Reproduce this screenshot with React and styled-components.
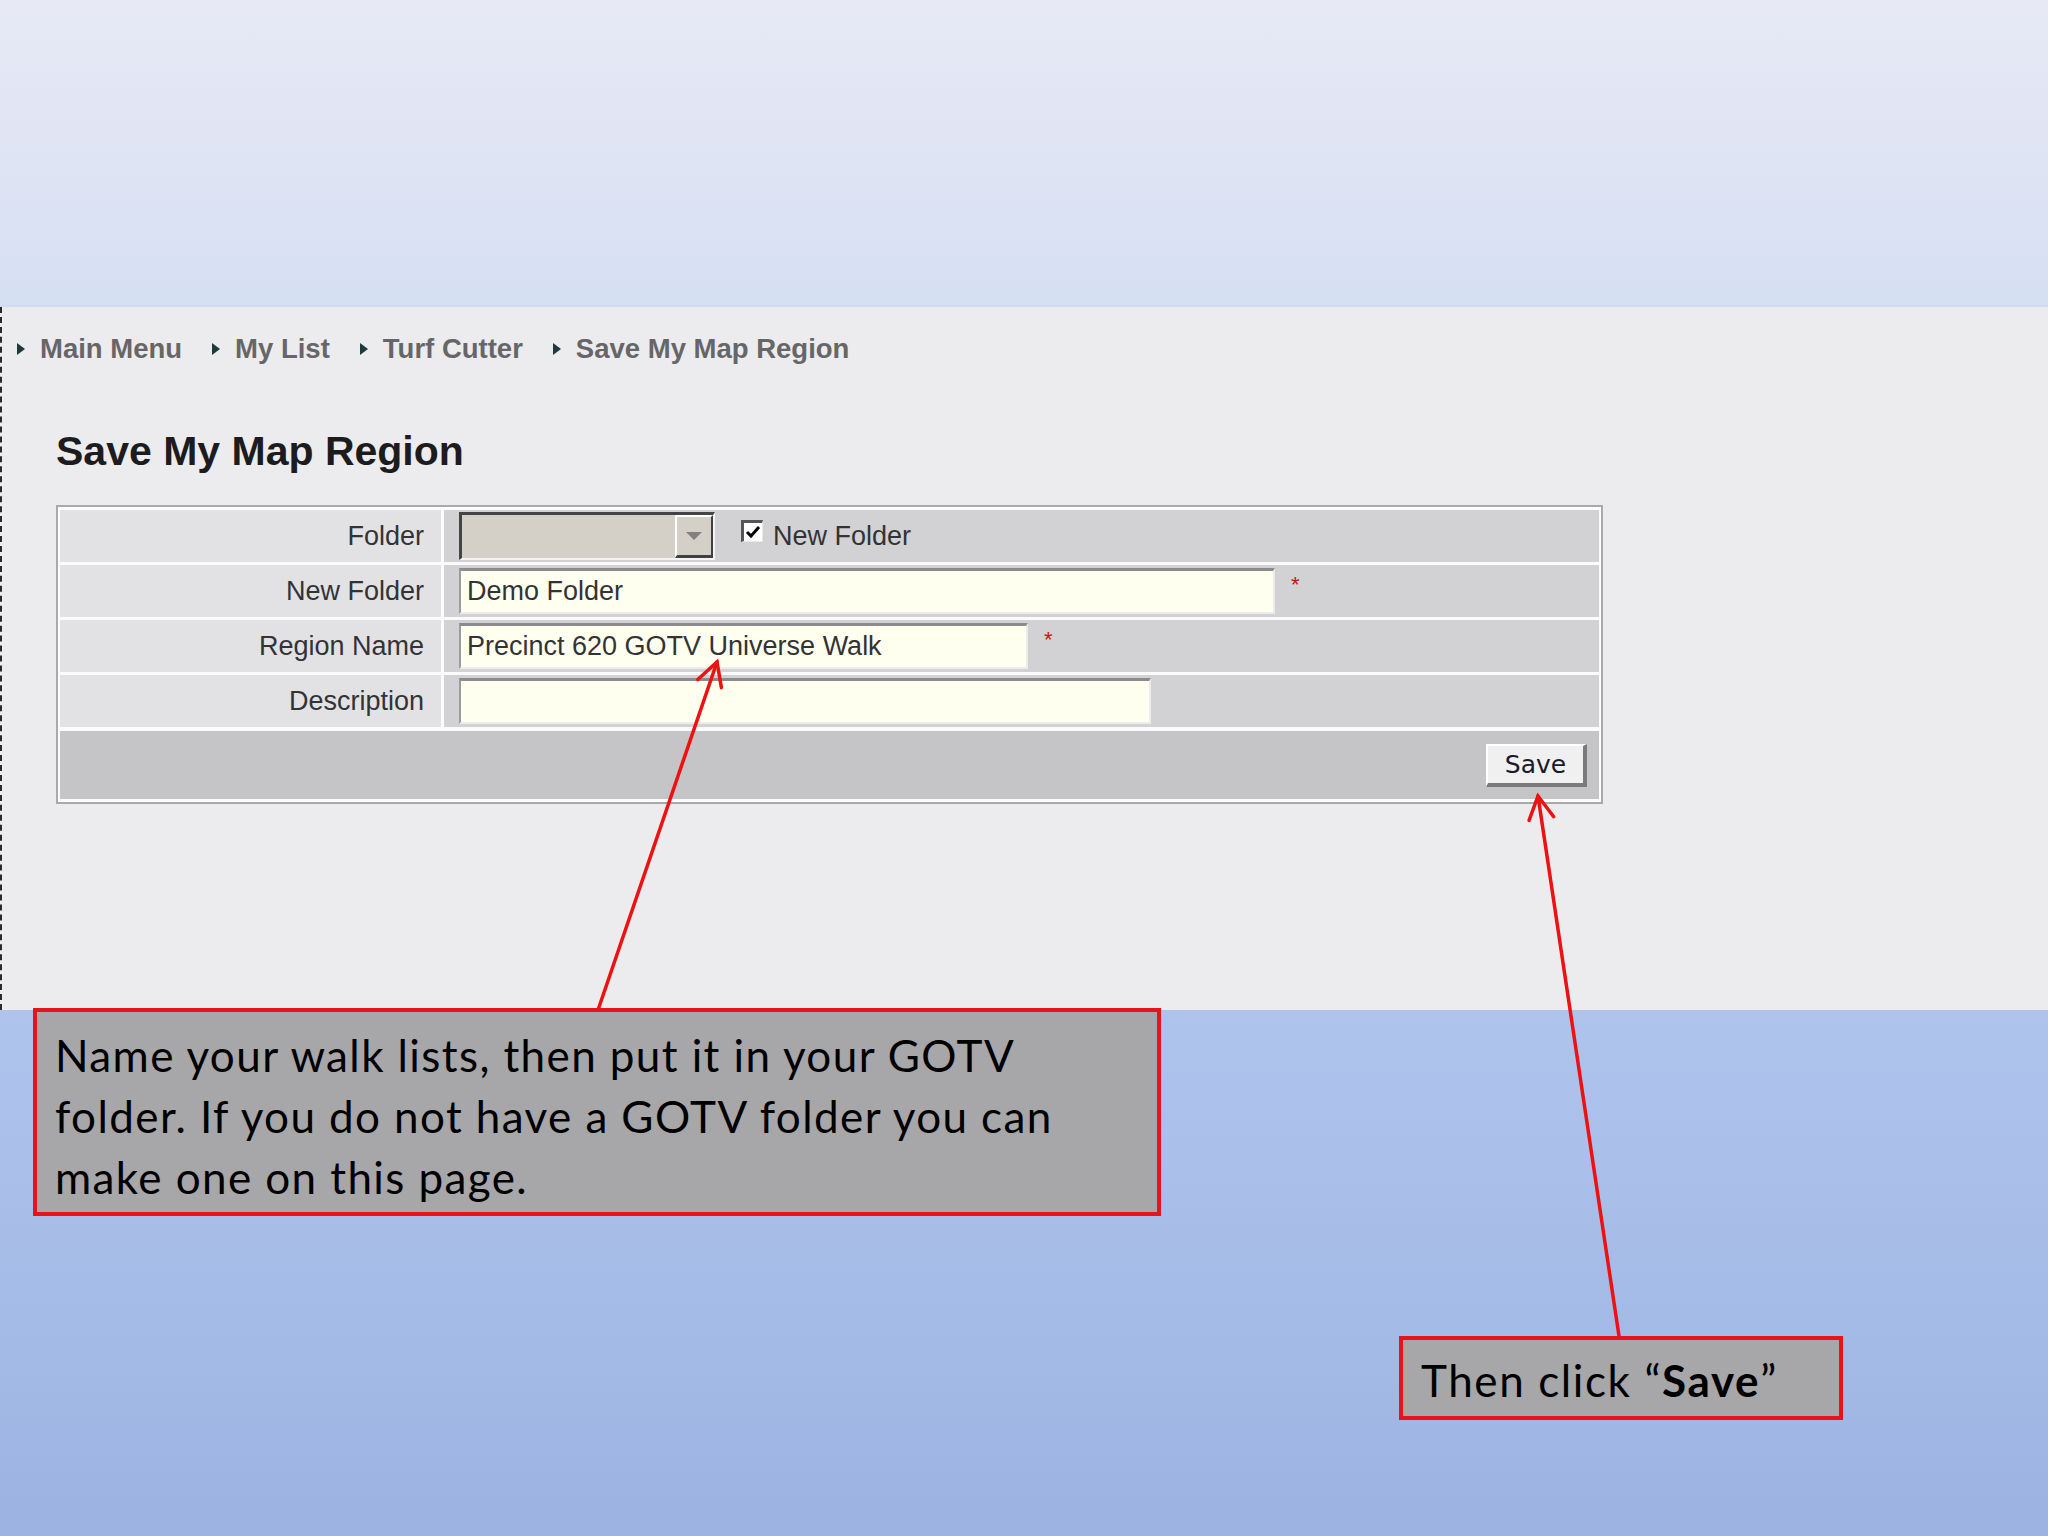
import React from 'react';
import styled, { createGlobalStyle } from 'styled-components';

const GlobalStyle = createGlobalStyle`
  html, body {
    margin: 0;
    padding: 0;
    background: #ecebed;
  }
  body {
    font-family: "Liberation Sans", Arial, sans-serif;
  }
`;

const Slide = styled.div`
  position: relative;
  width: 2048px;
  height: 1536px;
  display: flex;
  flex-direction: column;
  overflow: hidden;
`;

const TopBand = styled.div`
  height: 305px;
  flex: none;
  background: linear-gradient(180deg, #e7e9f5 0%, #dde3f3 60%, #d5e0f3 100%);
  border-bottom: 2px solid #cfdbf1;
`;

const Screen = styled.div`
  height: 703px;
  flex: none;
  box-sizing: border-box;
  background: #ecebed;
  border-left: 2px dashed #2a2a2a;
  padding: 22px 0 0 15px;
  display: flex;
  flex-direction: column;
`;

const BottomBand = styled.div`
  flex: 1;
  background: linear-gradient(180deg, #afc4ec 0%, #a6bce8 50%, #9cb3e2 100%);
`;

const Breadcrumbs = styled.nav`
  display: flex;
  align-items: center;
  gap: 30px;
  height: 40px;
`;

const Crumb = styled.span`
  display: flex;
  align-items: center;
  gap: 15px;
  font-size: 27.5px;
  font-weight: bold;
  color: #666668;
`;

const Arrowhead = styled.span`
  width: 0;
  height: 0;
  border-top: 6px solid transparent;
  border-bottom: 6px solid transparent;
  border-left: 8px solid #1d3b3a;
`;

const Title = styled.h1`
  margin: 58px 0 0 39px;
  font-size: 41px;
  font-weight: bold;
  color: #1c1c1e;
  line-height: 48px;
`;

const FormTable = styled.table`
  margin: 30px 0 0 39px;
  width: 1547px;
  border-collapse: separate;
  border-spacing: 0 3px;
  border: 2px solid #a9a9ab;
  box-shadow: inset 0 0 0 1px #ffffff;
  background: #fbfbfb;
  padding: 0 2px;
  font-size: 27px;
  color: #333336;
`;

const LabelCell = styled.td`
  width: 364px;
  height: 52px;
  padding: 0 17px 0 0;
  text-align: right;
  background: #e2e2e4;
  border-right: 3px solid #fbfbfb;
  white-space: nowrap;
`;

const ValueCell = styled.td`
  height: 52px;
  padding: 0 0 0 15px;
  background: #d2d2d4;
`;

const FooterCell = styled.td`
  height: 68px;
  padding: 0 12px 0 0;
  background: #c5c5c7;
  text-align: right;
  border-top: 1px solid #fbfbfb;
`;

const FieldLine = styled.div`
  display: flex;
  align-items: center;
`;

const TextBox = styled.div`
  box-sizing: border-box;
  width: ${(p) => p.$width}px;
  height: 46px;
  padding: 0 0 0 6px;
  display: flex;
  align-items: center;
  background: #fffff0;
  border-top: 3px solid #8c8c8e;
  border-left: 2px solid #9c9c9e;
  border-bottom: 2px solid #ececea;
  border-right: 2px solid #ececea;
  color: #333336;
  font-size: 27px;
`;

const Required = styled.span`
  margin: -12px 0 0 16px;
  color: #cc1111;
  font-size: 22px;
  align-self: center;
`;

const SelectBox = styled.div`
  box-sizing: border-box;
  width: 256px;
  height: 48px;
  display: flex;
  justify-content: flex-end;
  background: #d4d0c8;
  border-top: 3px solid #444446;
  border-left: 3px solid #444446;
  border-bottom: 2px solid #f4f4f4;
  border-right: 2px solid #f4f4f4;
`;

const DropButton = styled.div`
  box-sizing: border-box;
  width: 38px;
  display: flex;
  align-items: center;
  justify-content: center;
  background: #d4d0c8;
  border-top: 2px solid #ffffff;
  border-left: 2px solid #ffffff;
  border-bottom: 3px solid #404040;
  border-right: 2px solid #404040;
`;

const DropArrow = styled.span`
  width: 0;
  height: 0;
  border-left: 8px solid transparent;
  border-right: 8px solid transparent;
  border-top: 8px solid #808080;
`;

const CheckLabel = styled.label`
  display: flex;
  align-items: center;
  gap: 10px;
  margin-left: 26px;
  color: #333336;
`;

const CheckBox = styled.span`
  box-sizing: border-box;
  width: 22px;
  height: 22px;
  margin-top: -10px;
  display: flex;
  align-items: center;
  justify-content: center;
  background: #ffffff;
  border-top: 3px solid #555;
  border-left: 3px solid #555;
  border-bottom: 1px solid #e8e8e8;
  border-right: 1px solid #e8e8e8;
`;

const SaveButton = styled.button`
  box-sizing: border-box;
  width: 101px;
  height: 43px;
  padding: 0;
  font-family: "DejaVu Sans", Tahoma, sans-serif;
  font-size: 25px;
  font-weight: 500;
  color: #1a1a2a;
  background: #f0f0f0;
  border-top: 2px solid #ffffff;
  border-left: 2px solid #ffffff;
  border-bottom: 4px solid #7a7a7a;
  border-right: 4px solid #7a7a7a;
  vertical-align: middle;
`;

const Callout = styled.div`
  position: absolute;
  left: ${(p) => p.$left}px;
  top: ${(p) => p.$top}px;
  width: ${(p) => p.$width}px;
  height: ${(p) => p.$height}px;
  box-sizing: border-box;
  padding: ${(p) => p.$pad};
  background: #a7a6a9;
  border: 4px solid #e8121c;
  font-family: Lato, "Open Sans", sans-serif;
  font-size: 44px;
  line-height: 61px;
  color: #000000;
  letter-spacing: ${(p) => p.$spacing}px;
  white-space: nowrap;
`;

const Overlay = styled.svg`
  position: absolute;
  left: 0;
  top: 0;
  pointer-events: none;
`;

function Pointer({ x1, y1, x2, y2 }) {
  const angle = Math.atan2(y1 - y2, x1 - x2);
  const len = 26;
  const spread = 0.5;
  const a = [x2 + len * Math.cos(angle - spread), y2 + len * Math.sin(angle - spread)];
  const b = [x2 + len * Math.cos(angle + spread), y2 + len * Math.sin(angle + spread)];
  return (
    <g stroke="#ee1111" strokeWidth="3.5" fill="none" strokeLinecap="round">
      <line x1={x1} y1={y1} x2={x2} y2={y2} />
      <polyline points={`${a[0]},${a[1]} ${x2},${y2} ${b[0]},${b[1]}`} />
    </g>
  );
}

const crumbs = ['Main Menu', 'My List', 'Turf Cutter', 'Save My Map Region'];

export default function App() {
  return (
    <>
      <GlobalStyle />
      <Slide>
        <TopBand />
        <Screen>
          <Breadcrumbs>
            {crumbs.map((c) => (
              <Crumb key={c}>
                <Arrowhead />
                {c}
              </Crumb>
            ))}
          </Breadcrumbs>
          <Title>Save My Map Region</Title>
          <FormTable>
            <tbody>
              <tr>
                <LabelCell>Folder</LabelCell>
                <ValueCell>
                  <FieldLine>
                    <SelectBox>
                      <DropButton>
                        <DropArrow />
                      </DropButton>
                    </SelectBox>
                    <CheckLabel>
                      <CheckBox>
                        <svg width="16" height="16" viewBox="0 0 16 16">
                          <path d="M2 8 L6 12 L14 3" stroke="#000" strokeWidth="3" fill="none" />
                        </svg>
                      </CheckBox>
                      New Folder
                    </CheckLabel>
                  </FieldLine>
                </ValueCell>
              </tr>
              <tr>
                <LabelCell>New Folder</LabelCell>
                <ValueCell>
                  <FieldLine>
                    <TextBox $width={816}>Demo Folder</TextBox>
                    <Required>*</Required>
                  </FieldLine>
                </ValueCell>
              </tr>
              <tr>
                <LabelCell>Region Name</LabelCell>
                <ValueCell>
                  <FieldLine>
                    <TextBox $width={569}>Precinct 620 GOTV Universe Walk</TextBox>
                    <Required>*</Required>
                  </FieldLine>
                </ValueCell>
              </tr>
              <tr>
                <LabelCell>Description</LabelCell>
                <ValueCell>
                  <FieldLine>
                    <TextBox $width={692} />
                  </FieldLine>
                </ValueCell>
              </tr>
              <tr>
                <FooterCell colSpan={2}>
                  <SaveButton>Save</SaveButton>
                </FooterCell>
              </tr>
            </tbody>
          </FormTable>
        </Screen>
        <BottomBand />

        <Overlay width="2048" height="1536" viewBox="0 0 2048 1536">
          <Pointer x1={598} y1={1010} x2={717} y2={662} />
          <Pointer x1={1619} y1={1336} x2={1538} y2={796} />
        </Overlay>

        <Callout
          $left={33}
          $top={1008}
          $width={1128}
          $height={208}
          $pad="13px 0 0 18px"
          $spacing={1.4}
        >
          Name your walk lists, then put it in your GOTV
          <br />
          folder. If you do not have a GOTV folder you can
          <br />
          make one on this page.
        </Callout>
        <Callout
          $left={1399}
          $top={1336}
          $width={444}
          $height={84}
          $pad="10px 0 0 18px"
          $spacing={1.6}
        >
          Then click “<b>Save</b>”
        </Callout>
      </Slide>
    </>
  );
}
